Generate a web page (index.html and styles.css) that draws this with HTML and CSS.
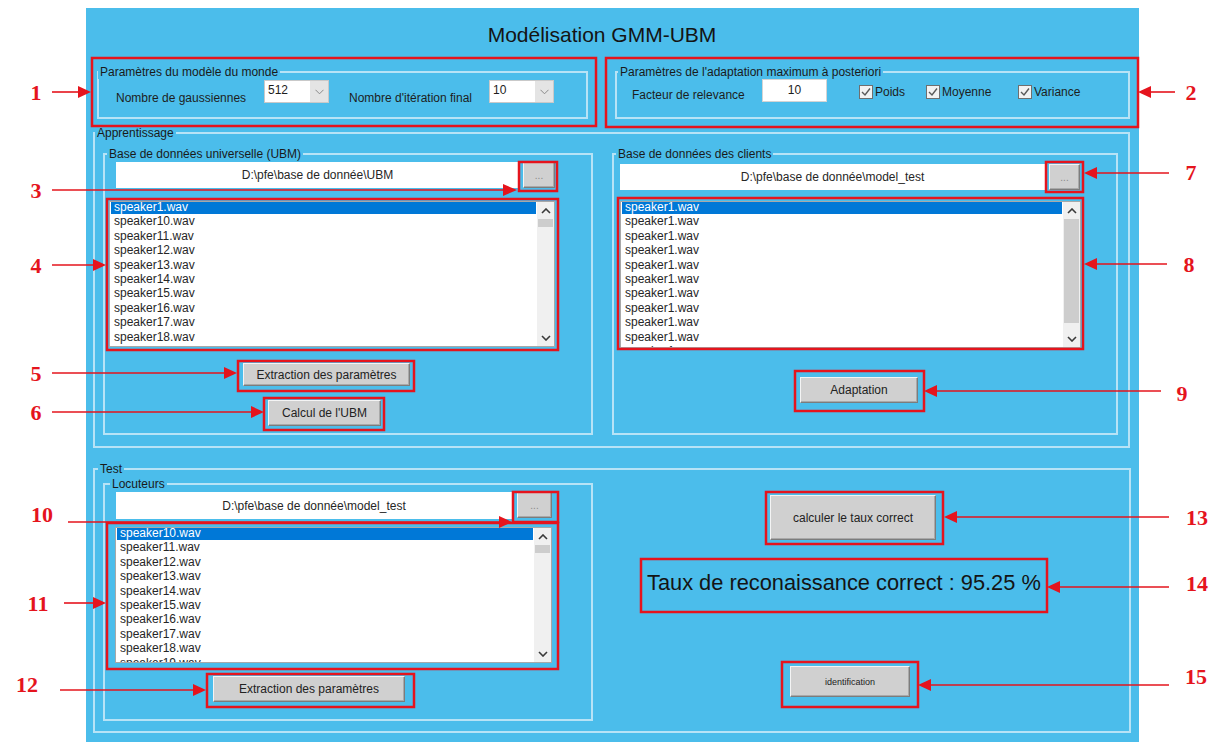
FILE: index.html
```html
<!DOCTYPE html>
<html lang="fr">
<head>
<meta charset="utf-8">
<title>Modélisation GMM-UBM</title>
<link rel="stylesheet" href="styles.css">
</head>
<body>
<div class="stage">
  <main class="app">
    <h1 class="title">Modélisation GMM-UBM</h1>

    <div class="row-top">
      <section class="frame world">
        <span class="legend lg-world">Paramètres du modèle du monde</span>
        <div class="param-row">
          <span class="label lbl-gauss">Nombre de gaussiennes</span>
          <div class="popup">
            <span class="popup-val">512</span>
            <span class="popup-btn"><svg width="9" height="6" viewBox="0 0 9 6"><polyline points="0.5,0.8 4.5,4.8 8.5,0.8" fill="none" stroke="#8a8a8a" stroke-width="1"/></svg></span>
          </div>
          <span class="label lbl-iter">Nombre d'itération final</span>
          <div class="popup">
            <span class="popup-val">10</span>
            <span class="popup-btn"><svg width="9" height="6" viewBox="0 0 9 6"><polyline points="0.5,0.8 4.5,4.8 8.5,0.8" fill="none" stroke="#8a8a8a" stroke-width="1"/></svg></span>
          </div>
        </div>
      </section>

      <section class="frame map">
        <span class="legend lg-map">Paramètres de l'adaptation maximum à posteriori</span>
        <div class="map-row">
          <span class="label lbl-rel">Facteur de relevance</span>
          <div class="edit">10</div>
          <span class="check c-poids"><span class="box"><svg width="12" height="12" viewBox="0 0 12 12"><polyline points="2,6 5,9 10,2.5" fill="none" stroke="#5a5a5a" stroke-width="1.4"/></svg></span>Poids</span>
          <span class="check c-moy"><span class="box"><svg width="12" height="12" viewBox="0 0 12 12"><polyline points="2,6 5,9 10,2.5" fill="none" stroke="#5a5a5a" stroke-width="1.4"/></svg></span>Moyenne</span>
          <span class="check"><span class="box"><svg width="12" height="12" viewBox="0 0 12 12"><polyline points="2,6 5,9 10,2.5" fill="none" stroke="#5a5a5a" stroke-width="1.4"/></svg></span>Variance</span>
        </div>
      </section>
    </div>

    <section class="frame learn">
      <span class="legend lg-learn">Apprentissage</span>
      <div class="learn-cols">
        <section class="frame ubm">
          <span class="legend lg-sub">Base de données universelle (UBM)</span>
          <div class="path-row r-ubm">
            <div class="path p-ubm">D:\pfe\base de donnée\UBM</div>
            <button class="browse b-ubm">...</button>
          </div>
          <div class="listbox lb-ubm">
            <div class="list-items">
              <div class="item sel">speaker1.wav</div>
              <div class="item">speaker10.wav</div>
              <div class="item">speaker11.wav</div>
              <div class="item">speaker12.wav</div>
              <div class="item">speaker13.wav</div>
              <div class="item">speaker14.wav</div>
              <div class="item">speaker15.wav</div>
              <div class="item">speaker16.wav</div>
              <div class="item">speaker17.wav</div>
              <div class="item">speaker18.wav</div>
              <div class="item">speaker19.wav</div>
            </div>
            <div class="scroll">
              <span class="arrow"><svg width="10" height="6" viewBox="0 0 10 6"><polyline points="1,5 5,1 9,5" fill="none" stroke="#3a3a3a" stroke-width="1.6"/></svg></span>
              <span class="thumb th-small"></span>
              <span class="spacer"></span>
              <span class="arrow"><svg width="10" height="6" viewBox="0 0 10 6"><polyline points="1,1 5,5 9,1" fill="none" stroke="#3a3a3a" stroke-width="1.6"/></svg></span>
            </div>
          </div>
          <button class="btn btn-extract">Extraction des paramètres</button>
          <button class="btn btn-ubm">Calcul de l'UBM</button>
        </section>

        <section class="frame clients">
          <span class="legend lg-sub">Base de données des clients</span>
          <div class="path-row r-clients">
            <div class="path p-clients">D:\pfe\base de donnée\model_test</div>
            <button class="browse b-clients">...</button>
          </div>
          <div class="listbox lb-clients">
            <div class="list-items">
              <div class="item sel">speaker1.wav</div>
              <div class="item">speaker1.wav</div>
              <div class="item">speaker1.wav</div>
              <div class="item">speaker1.wav</div>
              <div class="item">speaker1.wav</div>
              <div class="item">speaker1.wav</div>
              <div class="item">speaker1.wav</div>
              <div class="item">speaker1.wav</div>
              <div class="item">speaker1.wav</div>
              <div class="item">speaker1.wav</div>
              <div class="item">speaker1.wav</div>
            </div>
            <div class="scroll">
              <span class="arrow"><svg width="10" height="6" viewBox="0 0 10 6"><polyline points="1,5 5,1 9,5" fill="none" stroke="#3a3a3a" stroke-width="1.6"/></svg></span>
              <span class="thumb th-large"></span>
              <span class="spacer"></span>
              <span class="arrow"><svg width="10" height="6" viewBox="0 0 10 6"><polyline points="1,1 5,5 9,1" fill="none" stroke="#3a3a3a" stroke-width="1.6"/></svg></span>
            </div>
          </div>
          <button class="btn btn-adapt">Adaptation</button>
        </section>
      </div>
    </section>

    <section class="frame test">
      <span class="legend lg-test">Test</span>
      <section class="frame speakers">
        <span class="legend lg-speakers">Locuteurs</span>
        <div class="path-row r-speakers">
          <div class="path p-speakers">D:\pfe\base de donnée\model_test</div>
          <button class="browse b-speakers">...</button>
        </div>
        <div class="listbox lb-speakers">
          <div class="list-items">
            <div class="item sel">speaker10.wav</div>
            <div class="item">speaker11.wav</div>
            <div class="item">speaker12.wav</div>
            <div class="item">speaker13.wav</div>
            <div class="item">speaker14.wav</div>
            <div class="item">speaker15.wav</div>
            <div class="item">speaker16.wav</div>
            <div class="item">speaker17.wav</div>
            <div class="item">speaker18.wav</div>
            <div class="item">speaker19.wav</div>
          </div>
          <div class="scroll">
            <span class="arrow"><svg width="10" height="6" viewBox="0 0 10 6"><polyline points="1,5 5,1 9,5" fill="none" stroke="#3a3a3a" stroke-width="1.6"/></svg></span>
            <span class="thumb th-small"></span>
            <span class="spacer"></span>
            <span class="arrow"><svg width="10" height="6" viewBox="0 0 10 6"><polyline points="1,1 5,5 9,1" fill="none" stroke="#3a3a3a" stroke-width="1.6"/></svg></span>
          </div>
        </div>
        <button class="btn btn-extract2">Extraction des paramètres</button>
      </section>

      <div class="results">
        <button class="btn btn-rate">calculer le taux correct</button>
        <p class="rate">Taux de reconaissance correct : 95.25 %</p>
        <button class="btn btn-ident">identification</button>
      </div>
    </section>
  </main>

  <!-- numbered callouts pointing at each control -->
  <svg class="callouts" width="1219" height="742" viewBox="0 0 1219 742">
    <g fill="none" stroke="#e5141d" stroke-width="2.5">
      <rect x="92" y="58" width="504" height="68"/>
      <rect x="606" y="58" width="532" height="69"/>
      <rect x="519" y="162" width="38" height="29"/>
      <rect x="107" y="199" width="451" height="151"/>
      <rect x="238" y="361" width="176" height="30"/>
      <rect x="264" y="398" width="120" height="32"/>
      <rect x="1046" y="162" width="37" height="30"/>
      <rect x="618" y="198" width="465" height="151"/>
      <rect x="795" y="371" width="129" height="40"/>
      <rect x="513" y="492" width="45" height="30"/>
      <rect x="107" y="523" width="451" height="146"/>
      <rect x="207" y="674" width="207" height="33"/>
      <rect x="766" y="492" width="177" height="52"/>
      <rect x="641" y="559" width="406" height="53"/>
      <rect x="782" y="662" width="136" height="45"/>
    </g>
    <g stroke="#e5141d" stroke-width="1.6">
      <line x1="52" y1="92" x2="80" y2="92"/>
      <line x1="1175" y1="92" x2="1149" y2="92"/>
      <line x1="52" y1="190" x2="504" y2="190"/>
      <line x1="52" y1="265" x2="94" y2="265"/>
      <line x1="52" y1="373" x2="225" y2="373"/>
      <line x1="52" y1="412" x2="252" y2="412"/>
      <line x1="1169" y1="173" x2="1096" y2="173"/>
      <line x1="1167" y1="264" x2="1096" y2="264"/>
      <line x1="1161" y1="391" x2="936" y2="391"/>
      <line x1="68" y1="522" x2="500" y2="522"/>
      <line x1="64" y1="603" x2="94" y2="603"/>
      <line x1="60" y1="690" x2="194" y2="690"/>
      <line x1="1169" y1="517" x2="956" y2="517"/>
      <line x1="1169" y1="587" x2="1059" y2="587"/>
      <line x1="1169" y1="685" x2="930" y2="685"/>
    </g>
    <g fill="#e5141d">
      <polygon points="78,86 91,92 78,98"/>
      <polygon points="1151,86 1138,92 1151,98"/>
      <polygon points="503,184 517,190 503,196"/>
      <polygon points="93,259 106,265 93,271"/>
      <polygon points="224,367 237,373 224,379"/>
      <polygon points="251,406 264,412 251,418"/>
      <polygon points="1097,167 1084,173 1097,179"/>
      <polygon points="1097,258 1084,264 1097,270"/>
      <polygon points="937,385 924,391 937,397"/>
      <polygon points="499,516 512,522 499,528"/>
      <polygon points="93,597 106,603 93,609"/>
      <polygon points="193,684 206,690 193,696"/>
      <polygon points="957,511 944,517 957,523"/>
      <polygon points="1060,581 1047,587 1060,593"/>
      <polygon points="931,679 918,685 931,691"/>
    </g>
    <g class="callout-num" fill="#e5141d" text-anchor="middle" dominant-baseline="central">
      <text x="36" y="92">1</text>
      <text x="1191" y="92">2</text>
      <text x="36" y="190">3</text>
      <text x="36" y="265">4</text>
      <text x="36" y="373">5</text>
      <text x="36" y="412">6</text>
      <text x="1191" y="172">7</text>
      <text x="1189" y="264">8</text>
      <text x="1182" y="393">9</text>
      <text x="42" y="514">10</text>
      <text x="38" y="603">11</text>
      <text x="27" y="684">12</text>
      <text x="1197" y="517">13</text>
      <text x="1197" y="583">14</text>
      <text x="1196" y="676">15</text>
    </g>
  </svg>
</div>
</body>
</html>
```

FILE: styles.css
```css
* {
  box-sizing: border-box;
}

html,
body {
  margin: 0;
  background: #ffffff;
}

body {
  font-family: "Liberation Sans", Arial, sans-serif;
  color: #1d1d1d;
}

.stage {
  position: relative;
  width: 1219px;
  height: 742px;
  overflow: hidden;
  padding: 8px 0 0 86px;
}

.app {
  width: 1053px;
  height: 734px;
  background: #4bbdeb;
}

.title {
  margin: 0;
  padding: 14px 21px 0 0;
  font-size: 21px;
  line-height: 26px;
  font-weight: normal;
  text-align: center;
  color: #141414;
}

/* etched group boxes */
.frame {
  position: relative;
  border: 2px solid #b7e3f6;
}

.legend {
  position: absolute;
  top: -8px;
  padding: 0 2px;
  background: #4bbdeb;
  font-size: 12px;
  line-height: 14px;
  white-space: nowrap;
  color: #1a1a1a;
}

.lg-world { left: -1px; }
.lg-map { left: 1px; }
.lg-learn { left: 0; }
.lg-sub { left: 2px; }
.lg-test { left: 3px; }
.lg-speakers { left: 5px; }

/* top row: world model + MAP parameters */
.row-top {
  display: flex;
  margin-top: 23px;
  padding-left: 11px;
}

.world {
  width: 491px;
  height: 48px;
}

.map {
  width: 515px;
  height: 48px;
  margin-left: 27px;
}

.param-row,
.map-row {
  display: flex;
  align-items: flex-start;
}

.param-row {
  margin-top: 7px;
}

.map-row {
  margin-top: 6px;
}

.label {
  font-size: 12px;
  line-height: 14px;
  white-space: nowrap;
}

.lbl-gauss {
  margin: 11px 0 0 17px;
  width: 148px;
}

.lbl-iter {
  margin: 11px 0 0 20px;
  width: 140px;
}

.lbl-rel {
  margin: 9px 0 0 15px;
  width: 130px;
}

.popup {
  display: flex;
  width: 65px;
  height: 23px;
  background: #ffffff;
  border: 1px solid #c9c9c9;
}

.popup-val {
  flex: 1;
  padding: 2px 0 0 3px;
  font-size: 12px;
  line-height: 14px;
}

.popup-btn {
  width: 18px;
  background: #e4e4e4;
  display: flex;
  align-items: center;
  justify-content: center;
}

.edit {
  width: 65px;
  height: 23px;
  background: #ffffff;
  border: 1px solid #d4d4d4;
  padding-top: 3px;
  font-size: 12px;
  line-height: 14px;
  text-align: center;
}

.check {
  display: flex;
  align-items: center;
  gap: 2px;
  margin-top: 6px;
  font-size: 12px;
  line-height: 14px;
}

.c-poids {
  margin-left: 32px;
  width: 67px;
}

.c-moy {
  width: 92px;
}

.box {
  width: 14px;
  height: 14px;
  border: 1px solid #6f6f6f;
  background: #f2f2f2;
  display: flex;
  align-items: center;
  justify-content: center;
}

/* training */
.learn {
  margin: 13px 0 0 7px;
  width: 1037px;
  height: 316px;
  padding: 19px 0 0 8px;
}

.learn-cols {
  display: flex;
}

.ubm {
  width: 490px;
  height: 282px;
}

.clients {
  width: 506px;
  height: 282px;
  margin-left: 19px;
}

.path-row {
  display: flex;
}

.path {
  background: #ffffff;
  font-size: 12px;
  display: flex;
  align-items: center;
  justify-content: center;
  color: #262626;
}

.r-ubm { margin: 7px 0 0 11px; gap: 4px; }
.p-ubm { width: 403px; height: 26px; }
.b-ubm { width: 32px; height: 26px; }

.r-clients { margin: 9px 0 0 6px; gap: 4px; }
.p-clients { width: 425px; height: 26px; }
.b-clients { width: 31px; height: 26px; }

.r-speakers { margin: 7px 0 0 11px; gap: 5px; }
.p-speakers { width: 396px; height: 27px; }
.b-speakers { width: 35px; height: 26px; }

.browse,
.btn {
  display: block;
  padding: 0;
  background: #d0d0d0;
  border: 1px solid;
  border-color: #f4f4f4 #7c7c7c #7c7c7c #f4f4f4;
  box-shadow: inset -1px -1px 0 #a9a9a9;
  font-family: "Liberation Sans", Arial, sans-serif;
  color: #222222;
}

.browse {
  font-size: 10px;
  color: #8a8a8a;
}

.btn {
  font-size: 12px;
}

/* list boxes */
.listbox {
  display: flex;
  background: #ffffff;
  border: 1px solid #a8a8a8;
  overflow: hidden;
}

.list-items {
  flex: 1;
  margin-top: -2px;
  padding: 0 1px;
  overflow: hidden;
}

.item {
  height: 14.4px;
  line-height: 14.4px;
  padding-left: 3px;
  font-size: 12px;
  white-space: nowrap;
  color: #262626;
}

.item.sel {
  background: #0078d7;
  color: #ffffff;
}

.scroll {
  width: 17px;
  flex: none;
  background: #f0f0f0;
  display: flex;
  flex-direction: column;
}

.arrow {
  height: 17px;
  flex: none;
  display: flex;
  align-items: center;
  justify-content: center;
}

.thumb {
  flex: none;
  margin: 0 1px;
  background: #cdcdcd;
}

.th-small { height: 8px; }
.th-large { height: 104px; }

.spacer {
  flex: 1;
}

.lb-ubm { margin: 13px 0 0 4px; width: 446px; height: 146px; }
.lb-clients { margin: 11px 0 0 6px; width: 461px; height: 147px; }
.lb-speakers { margin: 8px 0 0 10px; width: 437px; height: 136px; }

.btn-extract { margin: 16px 0 0 138px; width: 167px; height: 23px; }
.btn-ubm { margin: 14px 0 0 163px; width: 113px; height: 26px; }
.btn-adapt { margin: 29px 0 0 186px; width: 118px; height: 26px; }
.btn-extract2 { margin: 13px 0 0 108px; width: 192px; height: 26px; }

/* test */
.test {
  margin: 20px 0 0 7px;
  width: 1038px;
  height: 265px;
  padding: 13px 0 0 8px;
  display: flex;
  align-items: flex-start;
}

.speakers {
  width: 490px;
  height: 238px;
}

.results {
  margin-left: 47px;
  display: flex;
  flex-direction: column;
  align-items: flex-start;
}

.btn-rate { margin: 12px 0 0 130px; width: 166px; height: 45px; }

.rate {
  margin: 31px 0 0 7px;
  font-size: 21.8px;
  line-height: 24px;
  color: #141414;
  white-space: nowrap;
}

.btn-ident {
  margin: 71px 0 0 150px;
  width: 120px;
  height: 31px;
  font-size: 9px;
}

/* callout layer drawn over the window */
.callouts {
  position: absolute;
  left: 0;
  top: 0;
  pointer-events: none;
}

.callout-num {
  font-family: "Liberation Serif", "Times New Roman", serif;
  font-weight: bold;
  font-size: 22px;
}
```
